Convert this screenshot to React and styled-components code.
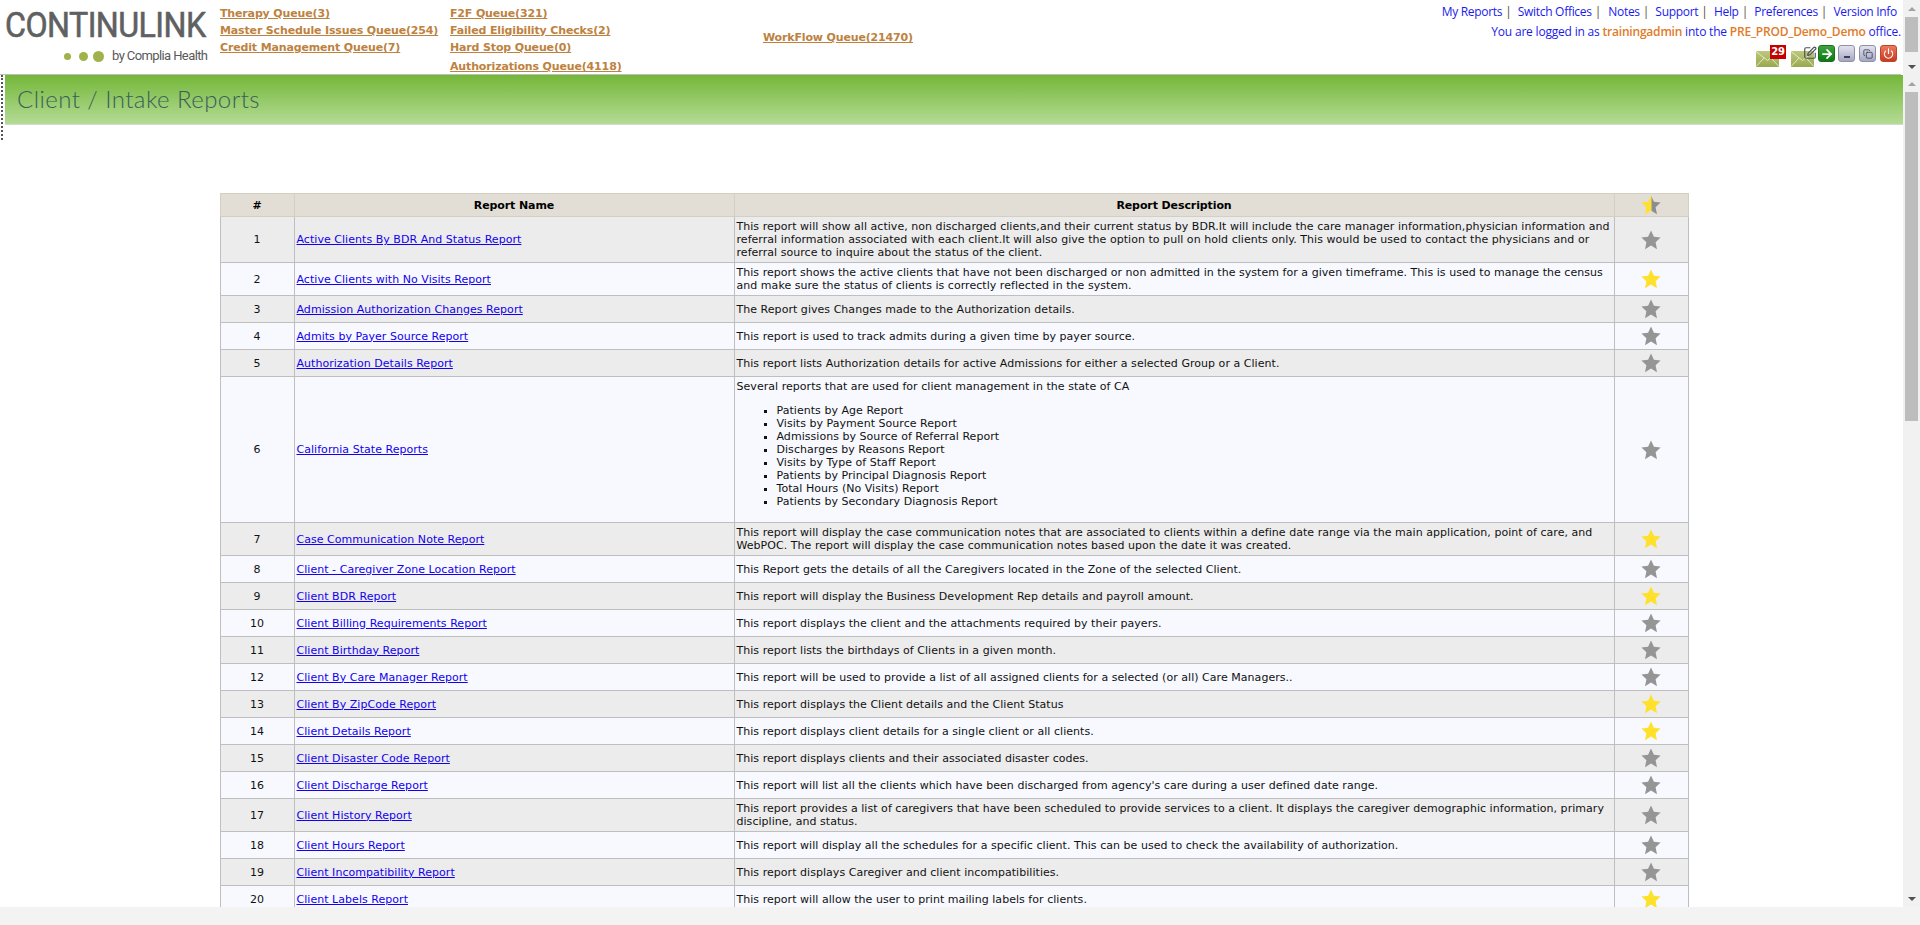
import React from "react";
import styled, { createGlobalStyle } from "styled-components";
import { ArrowRight, Copy, Power, SquarePen } from "lucide-react";

const Global = createGlobalStyle`
  html, body { margin: 0; padding: 0; height: 100%; overflow: hidden; background: #f3f3f3; }
  #root { height: 100%; }
`;

const Page = styled.div`
  display: flex;
  flex-direction: column;
  width: 1920px;
  height: 925px;
  background: #f3f3f3;
`;
const TopFrame = styled.div`
  display: flex;
  height: 75px;
  flex: none;
  background: #fff;
`;
const Header = styled.header`
  flex: 1;
  display: flex;
  position: relative;
  border-bottom: 1px solid #bdbdbd;
  box-sizing: content-box;
  height: 74px;
  margin-right: 2px;
`;
const Logo = styled.div`
  width: 220px;
  flex: none;
  display: flex;
  flex-direction: column;
  padding: 9px 0 0 5px;
  box-sizing: border-box;
`;
const LogoWord = styled.div`
  font: 400 35px/34px Roboto, "Liberation Sans", sans-serif;
  color: #5f6062;
  letter-spacing: -0.6px;
  -webkit-text-stroke: 0.6px #5f6062;
  white-space: nowrap;
  transform: scaleX(0.92);
  transform-origin: left center;
`;
const LogoSub = styled.div`
  display: flex;
  align-items: center;
  margin-top: 3px;
  padding-left: 59px;
  height: 20px;
`;
const Dot = styled.span`
  display: block;
  width: ${(p) => p.$size}px;
  height: ${(p) => p.$size}px;
  border-radius: 50%;
  background: #a0b34a;
  margin-right: ${(p) => p.$gap}px;
`;
const ByLine = styled.span`
  font: 400 13px/20px Roboto, sans-serif;
  color: #58595b;
  letter-spacing: -0.6px;
  white-space: nowrap;
`;
const QueueCol = styled.div`
  width: ${(p) => p.$w}px;
  flex: none;
  display: flex;
  flex-direction: column;
  padding-top: ${(p) => p.$top}px;
  box-sizing: border-box;
`;
const QueueLink = styled.a`
  font: 700 11px/17px "DejaVu Sans", sans-serif;
  letter-spacing: -0.15px;
  color: #bd8240;
  text-decoration: underline;
  white-space: nowrap;
  margin-top: ${(p) => p.$mt || 0}px;
`;
const RightPanel = styled.div`
  margin-left: auto;
  display: flex;
  flex-direction: column;
  align-items: flex-end;
  font: 400 12px/16px "Open Sans", sans-serif;
  padding-top: 4px;
`;
const TopLinks = styled.nav`
  display: flex;
  align-items: center;
  padding-right: 4px;
  height: 16px;
`;
const TopLink = styled.a`
  color: #1a1aee;
  letter-spacing: -0.3px;
  white-space: nowrap;
`;
const Pipe = styled.span`
  color: #5a4a3a;
  margin: 0 ${(p) => p.$r}px 0 3px;
`;
const Login = styled.div`
  color: #1a1aee;
  letter-spacing: -0.2px;
  margin-top: 4px;
  white-space: nowrap;
`;
const Strong = styled.b`
  color: #e07b28;
  font-weight: 600;
`;
const IconRow = styled.div`
  display: flex;
  align-items: flex-start;
  height: 23px;
  margin-top: 5px;
  padding-right: 4px;
`;
const MailWrap = styled.span`
  position: relative;
  display: block;
  width: 23px;
  height: 22px;
  margin-right: ${(p) => p.$mr}px;
`;
const MailSvg = styled.svg`
  position: absolute;
  left: 0;
  bottom: 0;
`;
const Badge = styled.span`
  position: absolute;
  left: 14px;
  top: 0;
  width: 16px;
  height: 14px;
  background: #c40000;
  color: #fff;
  font: 700 10px/14px "DejaVu Sans", sans-serif;
  letter-spacing: -0.3px;
  text-align: center;
`;
const EditGlyph = styled.span`
  position: absolute;
  left: 12px;
  top: 1px;
  width: 14px;
  height: 13px;
  color: #4d5160;
  display: flex;
`;
const IconBtn = styled.span`
  display: flex;
  align-items: center;
  justify-content: center;
  width: 17px;
  height: 17px;
  box-sizing: border-box;
  border-radius: 3px;
  margin-left: ${(p) => p.$ml || 0}px;
  border: 1px solid ${(p) => p.$edge};
  background: linear-gradient(${(p) => p.$from}, ${(p) => p.$to});
  color: ${(p) => p.$ink};
`;
const MinBar = styled.span`
  display: block;
  width: 6px;
  height: 2px;
  margin-top: 6px;
  background: #3b3f55;
`;

const Track = styled.div`
  width: 17px;
  flex: none;
  height: 100%;
  background: #f1f1f1;
  display: flex;
  flex-direction: column;
  align-items: center;
`;
const ArrowCell = styled.div`
  width: 17px;
  height: 17px;
  flex: none;
  display: flex;
  align-items: center;
  justify-content: center;
  margin-top: ${(p) => (p.$down ? "auto" : 0)};
`;
const Tri = styled.span`
  display: block;
  width: 0;
  height: 0;
  border-left: 4px solid transparent;
  border-right: 4px solid transparent;
  ${(p) => (p.$down ? "border-top: 4px solid #505050;" : "border-bottom: 4px solid #a3a3a3;")}
`;
const Thumb = styled.div`
  width: 13px;
  height: ${(p) => p.$h}px;
  background: #bdbdbd;
  flex: none;
`;

const BodyFrame = styled.div`
  display: flex;
  height: 832px;
  flex: none;
  background: #fff;
`;
const Splitter = styled.div`
  width: 5px;
  flex: none;
`;
const Dots = styled.div`
  width: 0;
  height: 65px;
  margin-left: 1px;
  border-left: 2px dotted #555;
`;
const Content = styled.main`
  flex: 1;
  min-width: 0;
  overflow: hidden;
`;
const Banner = styled.div`
  height: 50px;
  box-sizing: border-box;
  border-bottom: 1px solid #d3dfca;
  background: linear-gradient(#74b739, #b4db95);
  padding-left: 12px;
  font: 300 24px/48px Lato, sans-serif;
  color: #37605a;
  letter-spacing: 0.45px;
`;
const Table = styled.table`
  width: 1468px;
  margin: 68px auto 0;
  border-collapse: collapse;
  table-layout: fixed;
  font: 400 11px/13px "DejaVu Sans", sans-serif;
  letter-spacing: 0.04px;
  color: #111;
`;
const Th = styled.th`
  background: #e2ded5;
  border: 1px solid #d3cfc2;
  padding: 1px 2px;
  font-weight: 700;
  text-align: center;
  color: #000;
  letter-spacing: -0.1px;
`;
const Tr = styled.tr`
  background: ${(p) => (p.$odd ? "#ececec" : "#f7f9ff")};
`;
const Td = styled.td`
  border: 1px solid #bfbfbf;
  padding: 3px 2px;
  vertical-align: middle;
  text-align: ${(p) => (p.$center ? "center" : "left")};
`;
const ReportLink = styled.a`
  color: #1200ee;
  text-decoration: underline;
`;
const List = styled.ul`
  list-style: square;
  margin: 11px 0;
  padding-left: 40px;
`;
const StarSvg = styled.svg`
  display: block;
  margin: 0 auto;
`;
const BottomBand = styled.div`
  flex: 1;
  background: #f3f3f3;
`;

const STAR = "10,0.5 12.9,6.8 19.6,7.6 14.6,12.2 16,19.2 10,15.6 4,19.2 5.4,12.2 0.4,7.6 7.1,6.8";
const Star = ({ on }) => (
  <StarSvg width="20" height="20" viewBox="0 0 20 20">
    <polygon points={STAR} fill={on ? "#ffe02b" : "#959595"} />
  </StarSvg>
);
const HalfStar = () => (
  <StarSvg width="20" height="20" viewBox="0 0 20 20">
    <defs>
      <clipPath id="lh"><rect x="0" y="0" width="10.5" height="20" /></clipPath>
      <clipPath id="rh"><rect x="10.5" y="0" width="10" height="20" /></clipPath>
    </defs>
    <polygon points={STAR} fill="#ffe02b" clipPath="url(#lh)" />
    <polygon points={STAR} fill="#8d8d8d" clipPath="url(#rh)" />
  </StarSvg>
);
const Mail = () => (
  <MailSvg width="23" height="16" viewBox="0 0 23 16">
    <defs>
      <linearGradient id="mg" x1="0" y1="0" x2="0" y2="1">
        <stop offset="0" stopColor="#bcc87c" />
        <stop offset="1" stopColor="#99a94f" />
      </linearGradient>
    </defs>
    <rect width="23" height="16" fill="url(#mg)" />
    <path d="M0 0.5 L11.5 9.5 L23 0.5 M0 15.5 L8 7 M23 15.5 L15 7" fill="none" stroke="#e4e8c4" strokeWidth="1" />
  </MailSvg>
);

const Scrollbar = ({ thumb }) => (
  <Track>
    <ArrowCell><Tri /></ArrowCell>
    <Thumb $h={thumb} />
    <ArrowCell $down><Tri $down /></ArrowCell>
  </Track>
);

const rows = [
  ["Active Clients By BDR And Status Report", "This report will show all active, non discharged clients,and their current status by BDR.It will include the care manager information,physician information and referral information associated with each client.It will also give the option to pull on hold clients only. This would be used to contact the physicians and or referral source to inquire about the status of the client.", 0],
  ["Active Clients with No Visits Report", "This report shows the active clients that have not been discharged or non admitted in the system for a given timeframe. This is used to manage the census and make sure the status of clients is correctly reflected in the system.", 1],
  ["Admission Authorization Changes Report", "The Report gives Changes made to the Authorization details.", 0],
  ["Admits by Payer Source Report", "This report is used to track admits during a given time by payer source.", 0],
  ["Authorization Details Report", "This report lists Authorization details for active Admissions for either a selected Group or a Client.", 0],
  ["California State Reports", "Several reports that are used for client management in the state of CA", 0, ["Patients by Age Report", "Visits by Payment Source Report", "Admissions by Source of Referral Report", "Discharges by Reasons Report", "Visits by Type of Staff Report", "Patients by Principal Diagnosis Report", "Total Hours (No Visits) Report", "Patients by Secondary Diagnosis Report"]],
  ["Case Communication Note Report", "This report will display the case communication notes that are associated to clients within a define date range via the main application, point of care, and WebPOC. The report will display the case communication notes based upon the date it was created.", 1],
  ["Client - Caregiver Zone Location Report", "This Report gets the details of all the Caregivers located in the Zone of the selected Client.", 0],
  ["Client BDR Report", "This report will display the Business Development Rep details and payroll amount.", 1],
  ["Client Billing Requirements Report", "This report displays the client and the attachments required by their payers.", 0],
  ["Client Birthday Report", "This report lists the birthdays of Clients in a given month.", 0],
  ["Client By Care Manager Report", "This report will be used to provide a list of all assigned clients for a selected (or all) Care Managers..", 0],
  ["Client By ZipCode Report", "This report displays the Client details and the Client Status", 1],
  ["Client Details Report", "This report displays client details for a single client or all clients.", 1],
  ["Client Disaster Code Report", "This report displays clients and their associated disaster codes.", 0],
  ["Client Discharge Report", "This report will list all the clients which have been discharged from agency's care during a user defined date range.", 0],
  ["Client History Report", "This report provides a list of caregivers that have been scheduled to provide services to a client. It displays the caregiver demographic information, primary discipline, and status.", 0],
  ["Client Hours Report", "This report will display all the schedules for a specific client. This can be used to check the availability of authorization.", 0],
  ["Client Incompatibility Report", "This report displays Caregiver and client incompatibilities.", 0],
  ["Client Labels Report", "This report will allow the user to print mailing labels for clients.", 1],
];

const links = [
  ["My Reports", 6],
  ["Switch Offices", 7],
  ["Notes", 6],
  ["Support", 6],
  ["Help", 6],
  ["Preferences", 6],
];

export default function App() {
  return (
    <Page>
      <Global />
      <TopFrame>
        <Header>
          <Logo>
            <LogoWord>CONTINULINK</LogoWord>
            <LogoSub>
              <Dot $size={7} $gap={8} />
              <Dot $size={9} $gap={5} />
              <Dot $size={11} $gap={8} />
              <ByLine>by Complia Health</ByLine>
            </LogoSub>
          </Logo>
          <QueueCol $w={230} $top={5}>
            <QueueLink>Therapy Queue(3)</QueueLink>
            <QueueLink>Master Schedule Issues Queue(254)</QueueLink>
            <QueueLink>Credit Management Queue(7)</QueueLink>
          </QueueCol>
          <QueueCol $w={313} $top={5}>
            <QueueLink>F2F Queue(321)</QueueLink>
            <QueueLink>Failed Eligibility Checks(2)</QueueLink>
            <QueueLink>Hard Stop Queue(0)</QueueLink>
            <QueueLink $mt={2}>Authorizations Queue(4118)</QueueLink>
          </QueueCol>
          <QueueCol $w={200} $top={29}>
            <QueueLink>WorkFlow Queue(21470)</QueueLink>
          </QueueCol>
          <RightPanel>
            <TopLinks>
              {links.map(([t, r]) => (
                <React.Fragment key={t}>
                  <TopLink>{t}</TopLink>
                  <Pipe $r={r}>|</Pipe>
                </React.Fragment>
              ))}
              <TopLink>Version Info</TopLink>
            </TopLinks>
            <Login>
              You are logged in as <Strong>trainingadmin</Strong> into the <Strong>PRE_PROD_Demo_Demo</Strong> office.
            </Login>
            <IconRow>
              <MailWrap $mr={12}>
                <Mail />
                <Badge>29</Badge>
              </MailWrap>
              <MailWrap $mr={4}>
                <Mail />
                <EditGlyph><SquarePen size={14} strokeWidth={2} /></EditGlyph>
              </MailWrap>
              <IconBtn $edge="#1b6e1b" $from="#3fa33f" $to="#0c7a14" $ink="#fff">
                <ArrowRight size={14} strokeWidth={3} />
              </IconBtn>
              <IconBtn $ml={3} $edge="#8f90a8" $from="#e2e3ee" $to="#a5a7c2" $ink="#3b3f55">
                <MinBar />
              </IconBtn>
              <IconBtn $ml={4} $edge="#8f90a8" $from="#e2e3ee" $to="#a5a7c2" $ink="#3b3f55">
                <Copy size={10} strokeWidth={2} />
              </IconBtn>
              <IconBtn $ml={4} $edge="#c0432a" $from="#ec7a5e" $to="#c73a20" $ink="#fff">
                <Power size={11} strokeWidth={2.5} />
              </IconBtn>
            </IconRow>
          </RightPanel>
        </Header>
        <Scrollbar thumb={35} />
      </TopFrame>
      <BodyFrame>
        <Splitter><Dots /></Splitter>
        <Content>
          <Banner>Client / Intake Reports</Banner>
          <Table>
            <colgroup>
              <col style={{ width: 74 }} />
              <col style={{ width: 440 }} />
              <col style={{ width: 880 }} />
              <col style={{ width: 74 }} />
            </colgroup>
            <thead>
              <tr>
                <Th>#</Th>
                <Th>Report Name</Th>
                <Th>Report Description</Th>
                <Th><HalfStar /></Th>
              </tr>
            </thead>
            <tbody>
              {rows.map(([name, desc, on, list], i) => (
                <Tr key={name} $odd={i % 2 === 0}>
                  <Td $center>{i + 1}</Td>
                  <Td><ReportLink>{name}</ReportLink></Td>
                  <Td>
                    {desc}
                    {list && (
                      <List>
                        {list.map((l) => <li key={l}>{l}</li>)}
                      </List>
                    )}
                  </Td>
                  <Td $center><Star on={!!on} /></Td>
                </Tr>
              ))}
            </tbody>
          </Table>
        </Content>
        <Scrollbar thumb={329} />
      </BodyFrame>
      <BottomBand />
    </Page>
  );
}
